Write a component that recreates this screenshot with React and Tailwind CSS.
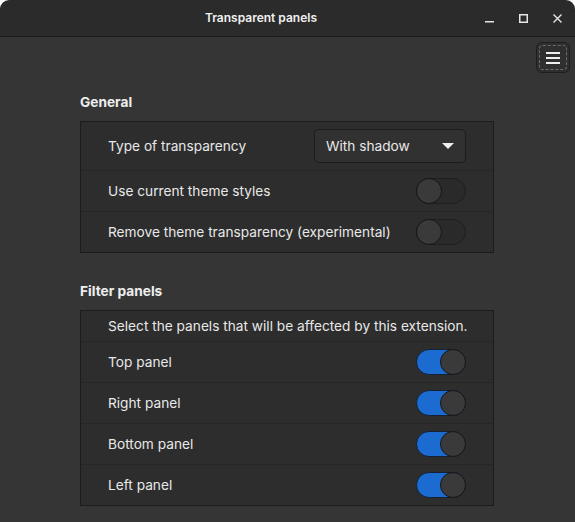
import React from "react";

function Switch({ on }) {
  return (
    <div
      className={`relative w-[50px] h-[26px] rounded-full border ${
        on ? "bg-[#1c6bd1] border-[#132237]" : "bg-[#2a2a2a] border-[#1f1f1f]"
      }`}>
      <div
        className={`absolute top-[-1px] w-[26px] h-[26px] rounded-full bg-[#3a3a3a] border border-[#161616] ${
          on ? "right-[-1px]" : "left-[-1px]"
        }`}
      />
    </div>
  );
}

function Row({ label, children, first, tall }) {
  return (
    <div
      className={`flex items-center justify-between pl-[27px] pr-[27px] ${
        tall ? "h-[48px]" : "h-[41px]"
      } ${first ? "" : "border-t border-[#262626]"}`}>
      <span className="text-[13.7px] text-[#e8e8e8]">{label}</span>
      {children}
    </div>
  );
}

function Section({ title, children, className }) {
  return (
    <div className={className}>
      <div className="h-[20px] leading-[20px] text-[13.7px] font-bold text-[#eeeeee]">
        {title}
      </div>
      <div className="mt-[9px] bg-[#2d2d2d] border border-[#1c1c1c]">
        {children}
      </div>
    </div>
  );
}

export default function App() {
  const panels = ["Top panel", "Right panel", "Bottom panel", "Left panel"];
  return (
    <div
      className="w-[575px] h-[522px] bg-white"
      style={{ fontFamily: "Inter, 'Noto Sans', sans-serif" }}>
      <div className="w-full h-full flex flex-col rounded-t-[9px] overflow-hidden">
        {/* header bar */}
        <div className="h-[37px] shrink-0 flex items-center bg-[#2b2b2b] border-b border-[#1a1a1a]">
          <div className="flex-1 flex justify-center pl-[49px]">
            <span className="text-[12px] font-semibold text-[#f0f0f0]">
              Transparent panels
            </span>
          </div>
          <div className="flex items-center gap-[2px] pr-[2px] text-[#e6e6e6]">
            <button className="w-[32px] h-[28px] flex items-center justify-center">
              <svg width="9" height="9" viewBox="0 0 9 9">
                <rect x="0" y="7" width="9" height="1.5" fill="currentColor" />
              </svg>
            </button>
            <button className="w-[32px] h-[28px] flex items-center justify-center">
              <svg width="9" height="9" viewBox="0 0 9 9">
                <rect x="0.75" y="0.75" width="7.5" height="7.5" fill="none" stroke="currentColor" strokeWidth="1.5" />
              </svg>
            </button>
            <button className="w-[32px] h-[28px] flex items-center justify-center">
              <svg width="9" height="9" viewBox="0 0 9 9">
                <path d="M0.5 0.5L8.5 8.5M8.5 0.5L0.5 8.5" stroke="currentColor" strokeWidth="1.4" />
              </svg>
            </button>
          </div>
        </div>

        {/* content */}
        <div className="flex-1 bg-[#353535]">
          <div className="flex justify-end pt-[5px] pr-[5px]">
            <button className="w-[34px] h-[31px] rounded-[6px] bg-[#2f2f2f] border border-[#1e1e1e] p-[2px]">
              <div className="w-full h-full rounded-[4px] border border-dashed border-[#6a6a6a] flex flex-col items-center justify-center gap-[3px]">
                <div className="w-[14px] h-[2px] bg-[#eeeeee]" />
                <div className="w-[14px] h-[2px] bg-[#eeeeee]" />
                <div className="w-[14px] h-[2px] bg-[#eeeeee]" />
              </div>
            </button>
          </div>

          <div className="pl-[80px] pr-[81px]">
            <Section title="General" className="mt-[19px]">
              <Row label="Type of transparency" first tall>
                <button className="w-[152px] h-[34px] rounded-[5px] bg-[#313131] border border-[#1c1c1c] flex items-center justify-between pl-[11px] pr-[11px]">
                  <span className="text-[13.7px] text-[#e8e8e8]">With shadow</span>
                  <svg width="12" height="6" viewBox="0 0 12 6">
                    <path d="M0 0H12L6 6Z" fill="#eeeeee" />
                  </svg>
                </button>
              </Row>
              <Row label="Use current theme styles">
                <Switch on={false} />
              </Row>
              <Row label="Remove theme transparency (experimental)">
                <Switch on={false} />
              </Row>
            </Section>

            <Section title="Filter panels" className="mt-[28px]">
              <div className="h-[30px] flex items-center pl-[27px]">
                <span className="text-[13.7px] text-[#e8e8e8]">
                  Select the panels that will be affected by this extension.
                </span>
              </div>
              {panels.map((p) => (
                <Row key={p} label={p}>
                  <Switch on />
                </Row>
              ))}
            </Section>
          </div>
        </div>
      </div>
    </div>
  );
}
